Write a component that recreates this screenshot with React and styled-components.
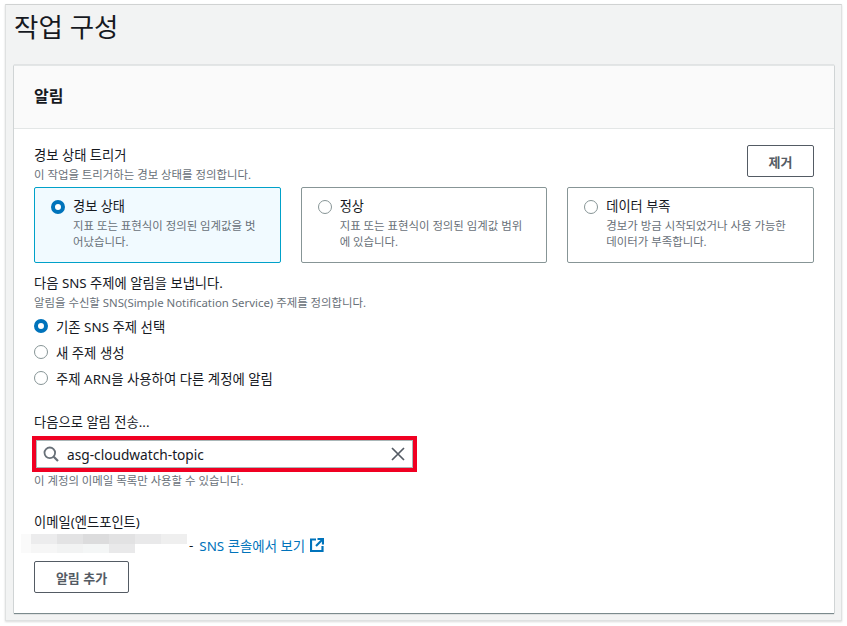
import React from "react";
import styled, { createGlobalStyle } from "styled-components";

const Global = createGlobalStyle`
  html, body { margin: 0; padding: 0; background: #fff; }
  body {
    font-family: "Noto Sans", "Noto Sans CJK KR", sans-serif;
    color: #16191f;
  }
`;

const Page = styled.div`
  width: 847px;
  height: 626px;
  padding: 4px 5px 5px 5px;
  box-sizing: border-box;
`;

const Panel = styled.div`
  height: 100%;
  box-sizing: border-box;
  background: #f2f3f3;
  border: 1px solid #dfe1e1;
  border-top-color: #d0d2d2;
  box-shadow: 0 1px 2px rgba(0, 0, 0, 0.15);
  padding: 0 7px 7px 8px;
  display: flex;
  flex-direction: column;
`;

const Title = styled.h1`
  margin: 0;
  height: 60px;
  font-size: 26.5px;
  line-height: 44px;
  font-weight: 400;
`;

const Card = styled.section`
  flex: 1;
  background: #fff;
  border-top: 1px solid #e3e6e6;
  box-shadow: 0 1px 1px rgba(0, 28, 36, 0.45), 0 0 1px rgba(0, 28, 36, 0.4);
`;

const CardHeader = styled.header`
  height: 63px;
  box-sizing: border-box;
  background: #fafafa;
  border-bottom: 1px solid #e3e6e6;
  padding: 0 20px 5px;
  display: flex;
  align-items: center;
  font-size: 16px;
  font-weight: 700;
`;

const CardBody = styled.div`
  padding: 16px 20px 0;
`;

const TopRow = styled.div`
  display: flex;
  justify-content: space-between;
  align-items: flex-start;
  height: 42px;
`;

const Label = styled.div`
  font-size: 13.3px;
  line-height: 20px;
`;

const Hint = styled.div`
  font-size: 11.4px;
  line-height: 15px;
  color: #687078;
  margin-top: ${(p) => p.$top ?? 2}px;
`;

const Button = styled.button`
  font-family: inherit;
  width: ${(p) => p.$w}px;
  height: 32px;
  box-sizing: border-box;
  background: #fff;
  border: 1px solid #545b64;
  border-radius: 2px;
  color: #545b64;
  font-size: 13px;
  font-weight: 700;
  padding: 0;
`;

const Tiles = styled.div`
  display: grid;
  grid-template-columns: repeat(3, 1fr);
  column-gap: 20px;
`;

const Tile = styled.div`
  height: 76px;
  box-sizing: border-box;
  border: 1px solid ${(p) => (p.$selected ? "#00a1c9" : "#879596")};
  background: ${(p) => (p.$selected ? "#f1faff" : "#fff")};
  border-radius: 2px;
  padding: 9px 16px;
  display: flex;
  gap: 8px;
`;

const Dot = styled.span`
  flex: none;
  width: 14px;
  height: 14px;
  box-sizing: border-box;
  border-radius: 50%;
  background: #fff;
  border: ${(p) => (p.$on ? "4px solid #0073bb" : "1px solid #879596")};
  margin-top: ${(p) => p.$top ?? 0}px;
`;

const TileText = styled.div`
  min-width: 0;
`;

const TileTitle = styled.div`
  font-size: 13.2px;
  line-height: 19px;
`;

const TileDesc = styled.div`
  font-size: 11.4px;
  line-height: 16px;
  color: #687078;
  margin-top: 2px;
`;

const Section = styled.div`
  margin-top: ${(p) => p.$top}px;
`;

const RadioList = styled.div`
  display: flex;
  flex-direction: column;
  gap: 8px;
  margin-top: 7px;
`;

const RadioRow = styled.div`
  display: flex;
  align-items: center;
  gap: 8px;
  height: 18px;
  font-size: 13.4px;
`;

const Highlight = styled.div`
  width: 385px;
  height: 36px;
  box-sizing: border-box;
  border: 4px solid #f00022;
  margin: 4px 0 0 -2px;
`;

const SearchBox = styled.div`
  height: 100%;
  box-sizing: border-box;
  border: 1px solid #aab7b8;
  background: #fff;
  display: flex;
  align-items: center;
  padding: 0 7px 0 6px;
  gap: 8px;
  font-size: 13.7px;
`;

const SearchValue = styled.span`
  flex: 1;
`;

const EmailRow = styled.div`
  display: flex;
  align-items: center;
  height: 20px;
  font-size: 13.4px;
  margin: 3px 0 0 -13px;
`;

const Mosaic = styled.div`
  display: grid;
  grid-template-columns: 10px repeat(6, 26px);
  grid-auto-rows: 9.5px;
  width: 166px;
  margin: 0 2px 3px 0;
`;

const Cell = styled.span`
  background: ${(p) => p.$c};
`;

const SnsLink = styled.a`
  color: #0073bb;
  margin-left: 6px;
  display: inline-flex;
  align-items: center;
  gap: 5px;
`;

const mosaic = [
  "#fafafa", "#ececed", "#e3e3e4", "#dcdcdd", "#e2e2e3", "#e9e9ea", "#efefef",
  "#fafafa", "#f6f6f6", "#f2f3f3", "#f4f6f6", "#e9e9ea", "#ffffff", "#ffffff",
];

const SearchIcon = () => (
  <svg width="16" height="16" viewBox="0 0 16 16" fill="none" stroke="#687078" strokeWidth="1.8">
    <circle cx="6.8" cy="6.8" r="5.3" />
    <path d="M10.7 10.7 15 15" strokeWidth="2.2" />
  </svg>
);

const CloseIcon = () => (
  <svg width="14" height="14" viewBox="0 0 14 14" fill="none" stroke="#545b64" strokeWidth="1.7">
    <path d="M1 1l12 12M13 1 1 13" />
  </svg>
);

const ExternalIcon = () => (
  <svg width="14" height="14" viewBox="0 0 14 14" fill="none" stroke="#0073bb" strokeWidth="2.2">
    <path d="M6 1.5H1V13h11.5V8" />
    <path d="M7.5 1H13v5.5" />
    <path d="M13 1 6 8" />
  </svg>
);

const tiles = [
  { title: "경보 상태", desc: "지표 또는 표현식이 정의된 임계값을 벗어났습니다.", on: true },
  { title: "정상", desc: "지표 또는 표현식이 정의된 임계값 범위에 있습니다." },
  { title: "데이터 부족", desc: "경보가 방금 시작되었거나 사용 가능한 데이터가 부족합니다." },
];

const radios = ["기존 SNS 주제 선택", "새 주제 생성", "주제 ARN을 사용하여 다른 계정에 알림"];

export default function App() {
  return (
    <Page>
      <Global />
      <Panel>
        <Title>작업 구성</Title>
        <Card>
          <CardHeader>알림</CardHeader>
          <CardBody>
            <TopRow>
              <div>
                <Label>경보 상태 트리거</Label>
                <Hint>이 작업을 트리거하는 경보 상태를 정의합니다.</Hint>
              </div>
              <Button $w={67}>제거</Button>
            </TopRow>
            <Tiles>
              {tiles.map((t) => (
                <Tile key={t.title} $selected={t.on}>
                  <Dot $on={t.on} $top={3} />
                  <TileText>
                    <TileTitle>{t.title}</TileTitle>
                    <TileDesc>{t.desc}</TileDesc>
                  </TileText>
                </Tile>
              ))}
            </Tiles>
            <Section $top={10}>
              <Label>다음 SNS 주제에 알림을 보냅니다.</Label>
              <Hint>알림을 수신할 SNS(Simple Notification Service) 주제를 정의합니다.</Hint>
              <RadioList>
                {radios.map((r, i) => (
                  <RadioRow key={r}>
                    <Dot $on={i === 0} />
                    {r}
                  </RadioRow>
                ))}
              </RadioList>
            </Section>
            <Section $top={25}>
              <Label>다음으로 알림 전송...</Label>
              <Highlight>
                <SearchBox>
                  <SearchIcon />
                  <SearchValue>asg-cloudwatch-topic</SearchValue>
                  <CloseIcon />
                </SearchBox>
              </Highlight>
              <Hint $top={1}>이 계정의 이메일 목록만 사용할 수 있습니다.</Hint>
            </Section>
            <Section $top={24}>
              <Label>이메일(엔드포인트)</Label>
              <EmailRow>
                <Mosaic>
                  {mosaic.map((c, i) => (
                    <Cell key={i} $c={c} />
                  ))}
                </Mosaic>
                -
                <SnsLink>
                  SNS 콘솔에서 보기 <ExternalIcon />
                </SnsLink>
              </EmailRow>
            </Section>
            <Section $top={6}>
              <Button $w={95}>알림 추가</Button>
            </Section>
          </CardBody>
        </Card>
      </Panel>
    </Page>
  );
}
